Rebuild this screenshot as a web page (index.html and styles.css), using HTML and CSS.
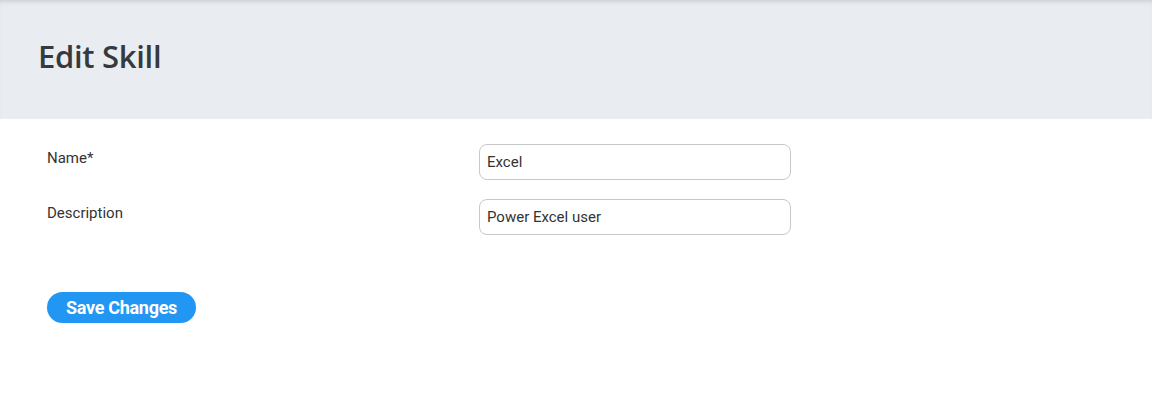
FILE: index.html
```html
<!DOCTYPE html>
<html lang="en">
<head>
    <meta charset="UTF-8">
    <meta name="viewport" content="width=device-width, initial-scale=1.0">
    <title>Edit Skill</title>
    <link rel="stylesheet" href="styles.css">
</head>
<body>
    <div class="page-header">
        <h1>Edit Skill</h1>
    </div>
    <form class="skill-form">
        <div class="form-row">
            <label for="skillName">Name*</label>
            <input type="text" id="skillName" value="Excel">
        </div>
        <div class="form-row">
            <label for="skillDesc">Description</label>
            <input type="text" id="skillDesc" value="Power Excel user">
        </div>
        <div class="actions">
            <button type="button">Save Changes</button>
        </div>
    </form>
</body>
</html>
```

FILE: styles.css
```css
* {
    margin: 0;
    padding: 0;
    box-sizing: border-box;
}
body {
    font-family: Roboto, sans-serif;
    background: #fff;
    color: #333;
}
.page-header {
    height: 119px;
    background: #e9edf1;
    box-shadow: inset 0 4px 4px -2px rgba(0,0,0,0.12);
    display: flex;
    align-items: center;
    padding: 0 38px 8px;
}
.page-header h1 {
    font-family: 'Open Sans', sans-serif;
    font-size: 31px;
    font-weight: 600;
    color: #363a3d;
    letter-spacing: -0.3px;
}
.skill-form {
    padding: 25px 47px;
}
.form-row {
    display: flex;
    align-items: flex-start;
    margin-bottom: 19px;
}
.form-row label {
    width: 432px;
    font-size: 15px;
    color: #333;
    padding-top: 5px;
}
.form-row input {
    width: 312px;
    height: 36px;
    border: 1px solid #c8c8c8;
    border-radius: 8px;
    padding: 0 7px;
    font-family: Roboto, sans-serif;
    font-size: 15px;
    color: #333;
    outline: none;
}
.actions {
    margin-top: 57px;
}
.actions button {
    background: #2196f3;
    color: #fff;
    border: none;
    border-radius: 16px;
    height: 31px;
    width: 149px;
    font-family: Roboto, sans-serif;
    font-size: 18px;
    font-weight: 700;
    letter-spacing: -0.3px;
    cursor: pointer;
}
```
